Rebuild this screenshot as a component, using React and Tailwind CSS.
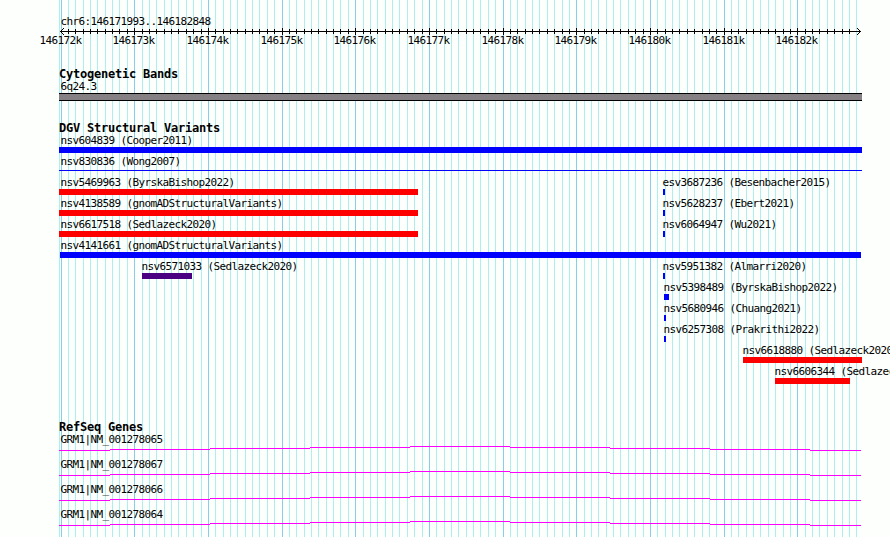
import React from 'react';

const WIDTH = 890;
const HEIGHT = 537;
const PANEL_START = 59;
const FIRST_TICK = 61;
const TICK_STEP = 7.368;

const ticks = Array.from({ length: 109 }, (_, i) => ({
  x: Math.floor(FIRST_TICK + i * TICK_STEP + 0.01),
  major: i % 10 === 0,
}));

const majorTicks = ticks.filter((tick) => tick.major);

const colors = {
  blue: 'bg-[#0000ff]',
  red: 'bg-[#ff0000]',
  indigo: 'bg-[#4b0082]',
};

// One entry per track line; start and end are panel pixels.
const variantRows = [
  [{ name: 'nsv604839 (Cooper2011)', start: 59, end: 862, label: 60, color: 'blue' }],
  [{ name: 'nsv830836 (Wong2007)', start: 59, end: 862, label: 60, color: 'blue', thin: true }],
  [
    { name: 'nsv5469963 (ByrskaBishop2022)', start: 59, end: 418, label: 60, color: 'red' },
    { name: 'esv3687236 (Besenbacher2015)', start: 663, end: 665, label: 662, color: 'blue' },
  ],
  [
    { name: 'nsv4138589 (gnomADStructuralVariants)', start: 59, end: 418, label: 60, color: 'red' },
    { name: 'nsv5628237 (Ebert2021)', start: 663, end: 665, label: 662, color: 'blue' },
  ],
  [
    { name: 'nsv6617518 (Sedlazeck2020)', start: 59, end: 418, label: 60, color: 'red' },
    { name: 'nsv6064947 (Wu2021)', start: 663, end: 665, label: 662, color: 'blue' },
  ],
  [{ name: 'nsv4141661 (gnomADStructuralVariants)', start: 60, end: 861, label: 60, color: 'blue' }],
  [
    { name: 'nsv6571033 (Sedlazeck2020)', start: 142, end: 192, label: 141, color: 'indigo' },
    { name: 'nsv5951382 (Almarri2020)', start: 663, end: 665, label: 662, color: 'blue' },
  ],
  [{ name: 'nsv5398489 (ByrskaBishop2022)', start: 664, end: 669, label: 663, color: 'blue' }],
  [{ name: 'nsv5680946 (Chuang2021)', start: 664, end: 666, label: 663, color: 'blue' }],
  [{ name: 'nsv6257308 (Prakrithi2022)', start: 664, end: 666, label: 663, color: 'blue' }],
  [{ name: 'nsv6618880 (Sedlazeck2020)', start: 743, end: 862, label: 742, color: 'red' }],
  [{ name: 'nsv6606344 (Sedlazeck2020)', start: 775, end: 850, label: 774, color: 'red' }],
];

const genes = [
  'GRM1|NM_001278065',
  'GRM1|NM_001278067',
  'GRM1|NM_001278066',
  'GRM1|NM_001278064',
];

// Intron line, drawn as short segments that rise one pixel at a time.
const intron = [
  [59, 110, 4],
  [110, 210, 3],
  [210, 310, 2],
  [310, 410, 1],
  [410, 510, 0],
  [510, 610, 1],
  [610, 710, 2],
  [710, 810, 3],
  [810, 861, 4],
];

const Grid = () => (
  <svg className="absolute inset-0" width={WIDTH} height={HEIGHT} shapeRendering="crispEdges">
    <rect x={PANEL_START} y="0" width="1" height={HEIGHT} fill="#afeeee" />
    {ticks.map(({ x, major }) => (
      <rect key={x} x={x} y="0" width="1" height={HEIGHT} fill={major ? '#87ceeb' : '#afeeee'} />
    ))}
  </svg>
);

const Label = ({ x, children }) => (
  <div
    className="h-3 w-0 whitespace-pre text-[11px] leading-3 tracking-[-0.622px]"
    style={{ marginLeft: x + 0.5 }}
  >
    {children}
  </div>
);

const TrackTitle = ({ children }) => (
  <h2 className="ml-[59px] h-3 whitespace-pre text-[12px] font-bold leading-[11px] tracking-[-0.224px]">
    {children}
  </h2>
);

const Ruler = () => (
  <div>
    <svg className="block" width={WIDTH} height="7" shapeRendering="crispEdges">
      <rect x="60" y="3" width="801" height="1" />
      {ticks.slice(1, -1).map(({ x, major }) => (
        <rect key={x} x={x} y={major ? 0 : 1} width="1" height={major ? 7 : 5} />
      ))}
      <path d="M61 2h1v1h-1zM62 1h1v1h-1zM63 0h1v1h-1zM61 4h1v1h-1zM62 5h1v1h-1zM63 6h1v1h-1z" />
      <path d="M859 2h1v1h-1zM858 1h1v1h-1zM857 0h1v1h-1zM859 4h1v1h-1zM858 5h1v1h-1zM857 6h1v1h-1z" />
    </svg>
    <div className="grid">
      {majorTicks.map(({ x }, i) => (
        <div key={x} className="col-start-1 row-start-1">
          <Label x={x - 22}>{`${146172 + i}k`}</Label>
        </div>
      ))}
    </div>
  </div>
);

const Variant = ({ name, start, end, label, color, thin }) => (
  <div className="col-start-1 row-start-1">
    <Label x={label}>{name}</Label>
    <div
      className={`${colors[color]} ${thin ? 'mt-0.5 h-px' : 'h-1.5'}`}
      style={{ marginLeft: start, width: end - start }}
    />
  </div>
);

const Gene = ({ name }) => (
  <div className="h-[25px]">
    <Label x={60}>{name}</Label>
    <svg className="block" width={WIDTH} height="5" shapeRendering="crispEdges">
      {intron.map(([from, to, y]) => (
        <rect key={from} x={from} y={y} width={to - from} height="1" fill="#ff00ff" />
      ))}
    </svg>
  </div>
);

export default function App() {
  return (
    <div className="relative h-[537px] w-[890px] overflow-hidden bg-[#fdfffc] font-['DejaVu_Sans_Mono',monospace] text-black">
      <Grid />
      <div className="relative flex flex-col pt-4">
        <Label x={60}>chr6:146171993..146182848</Label>
        <Ruler />

        <section className="mt-[22px]">
          <TrackTitle>Cytogenetic Bands</TrackTitle>
          <Label x={60}>6q24.3</Label>
          <div className="ml-[59px] h-2 w-[803px] border-y border-black bg-[#848084]" />
        </section>

        <section className="mt-[22px]">
          <TrackTitle>DGV Structural Variants</TrackTitle>
          {variantRows.map((row) => (
            <div key={row[0].name} className="grid h-[21px]">
              {row.map((variant) => (
                <Variant key={variant.name} {...variant} />
              ))}
            </div>
          ))}
        </section>

        <section className="mt-[35px]">
          <TrackTitle>RefSeq Genes</TrackTitle>
          {genes.map((name) => (
            <Gene key={name} name={name} />
          ))}
        </section>
      </div>
    </div>
  );
}
